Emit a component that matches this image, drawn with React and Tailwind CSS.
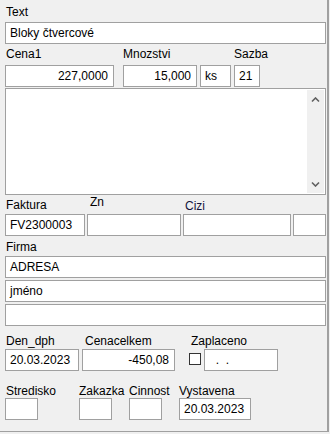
import React from 'react';

// plain grey-bordered edit box, like a desktop form control
const Field = ({ className = '', right = false, children }) => (
  <div
    className={`h-[22px] shrink-0 border border-[#a0a0a0] bg-white flex items-center px-[4px] text-black whitespace-pre ${
      right ? 'justify-end pr-[5px]' : ''
    } ${className}`}
  >
    {children}
  </div>
);

const Chevron = ({ down = false }) => (
  <svg width="9" height="6" viewBox="0 0 9 6" className="block">
    <path
      d={down ? 'M1 1.5 L4.5 5 L8 1.5' : 'M1 4.5 L4.5 1 L8 4.5'}
      fill="none"
      stroke="#606060"
      strokeWidth="1.6"
    />
  </svg>
);

export default function App() {
  return (
    <div
      className="w-[330px] h-[434px] bg-[#f0f0f0] text-[12px] leading-[14px] text-black"
      style={{ fontFamily: '"Liberation Sans", Arial, sans-serif' }}
    >
      <div className="w-[329px] h-[432px] border-r-2 border-b border-[#a0a0a0] pl-[5px] pt-[5px] flex flex-col">
        {/* Text */}
        <span className="pl-[1px] h-[14px]">Text</span>
        <Field className="mt-[3px] w-[321px]">Bloky čtvercové</Field>

        {/* Cena1 / Mnozstvi / Sazba */}
        <div className="flex mt-[3px] h-[14px]">
          <span className="w-[118px] pl-[1px]">Cena1</span>
          <span className="w-[111px]">Mnozstvi</span>
          <span>Sazba</span>
        </div>
        <div className="flex mt-[4px]">
          <Field right className="w-[109px]">227,0000</Field>
          <Field right className="w-[74px] ml-[9px]">15,000</Field>
          <Field className="w-[31px] ml-[3px]">ks</Field>
          <Field className="w-[26px] ml-[3px]">21</Field>
        </div>

        {/* memo */}
        <div className="mt-[1px] w-[321px] h-[107px] border border-[#a0a0a0] bg-white flex justify-end p-[1px]">
          <div className="w-[17px] h-full bg-[#f0f0f0] flex flex-col items-center justify-between pt-[7px] pb-[6px]">
            <Chevron />
            <Chevron down />
          </div>
        </div>

        {/* Faktura / Zn / Cizi */}
        <div className="flex h-[19px]">
          <span className="w-[85px] pl-[1px] mt-[3px]">Faktura</span>
          <span className="w-[95px]">Zn</span>
          <span className="mt-[4px] text-[#14143c]">Cizi</span>
        </div>
        <div className="flex">
          <Field className="w-[80px]">FV2300003</Field>
          <Field className="w-[94px] ml-[2px]" />
          <Field className="w-[108px] ml-[2px]" />
          <Field className="w-[33px] ml-[2px]" />
        </div>

        {/* Firma */}
        <span className="pl-[1px] mt-[4px] h-[14px]">Firma</span>
        <Field className="mt-[2px] w-[321px]">ADRESA</Field>
        <Field className="mt-[2px] w-[321px]">jméno</Field>
        <Field className="mt-[2px] w-[321px]" />

        {/* Den_dph / Cenacelkem / Zaplaceno */}
        <div className="flex mt-[8px] h-[14px]">
          <span className="w-[80px] pl-[1px]">Den_dph</span>
          <span className="w-[106px]">Cenacelkem</span>
          <span>Zaplaceno</span>
        </div>
        <div className="flex mt-[1px]">
          <Field className="w-[74px]">20.03.2023</Field>
          <Field right className="w-[93px] ml-[3px]">-450,08</Field>
          <div className="ml-[14px] mt-[4px] w-[12px] h-[12px] border border-[#333333] bg-white" />
          <Field className="w-[74px] ml-[3px]">{'  .  .'}</Field>
        </div>

        {/* Stredisko / Zakazka / Cinnost / Vystavena */}
        <div className="flex mt-[13px] h-[14px]">
          <span className="w-[74px] pl-[1px]">Stredisko</span>
          <span className="w-[50px]">Zakazka</span>
          <span className="w-[50px]">Cinnost</span>
          <span>Vystavena</span>
        </div>
        <div className="flex">
          <Field className="w-[33px]" />
          <Field className="w-[33px] ml-[41px]" />
          <Field className="w-[33px] ml-[17px]" />
          <Field className="w-[72px] ml-[17px]">20.03.2023</Field>
        </div>
      </div>
    </div>
  );
}
